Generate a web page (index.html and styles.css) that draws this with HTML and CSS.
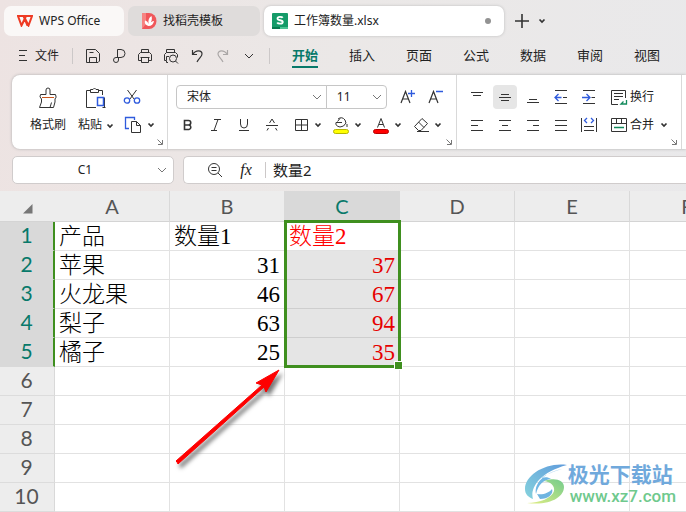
FILE: index.html
```
<!DOCTYPE html>
<html lang="zh-CN">
<head>
<meta charset="utf-8">
<title>工作簿数量.xlsx - WPS Office</title>
<link rel="stylesheet" href="styles.css">
</head>
<body>
<svg class="defs" aria-hidden="true">
  <symbol id="caret" viewBox="0 0 8 6"><path d="M1.5 1.5 4 4l2.5-2.5" stroke-width="1.7"/></symbol>
  <symbol id="chevron" viewBox="0 0 10 6"><path d="m1 1 4 4 4-4"/></symbol>
  <symbol id="launch" viewBox="0 0 6 6"><path d="m.5.5 4.500 4.500M1 5.500h4.500V1"/></symbol>
</svg>

<nav class="tabs">
  <button class="tab home">
    <svg width="16" height="12" viewBox="0 0 16 12"><path d="M1 1h14l-3.500 9.500L8 3.500l-3.500 7L1 1h5.500l4 9.500M4.500 10.500 9 1" fill="none" stroke="#ee3a23" stroke-width="2"/></svg>
    WPS Office
  </button>
  <button class="tab template">
    <svg width="16" height="16" viewBox="0 0 16 16"><path d="M1 0h7a7.500 8 0 0 1 0 16H1z" fill="#f0575a"/><path d="M1 0h4v11l-4 5z" fill="#f68482"/><path d="M7.500 13C4 12 3.500 10 4 7.500 6 8 7 9 7.500 11 7 7 8 4.500 10.500 3c1 3 0 6-2 8 .8-1.700 2.500-2.800 4.500-3-.5 3-2.500 5-5.500 5z" fill="#fff"/></svg>
    找稻壳模板
  </button>
  <button class="tab file">
    <svg width="16" height="16" viewBox="0 0 16 16"><rect width="16" height="16" rx="1" fill="#159b69"/><path d="M0 14h8v2H0z" fill="#087a4f"/><path d="M8 14h8v2H8z" fill="#4cc394"/><path d="M10.700 4.700C10 3.500 5.500 3.200 5.500 5.500c0 2.500 5.300 1 5.300 3.500 0 2.300-4.800 2-5.600.500" fill="none" stroke="#fff" stroke-width="1.800"/></svg>
    工作簿数量.xlsx
    <span class="dot"></span>
  </button>
  <button class="icon plus" aria-label="新建"><svg width="14" height="14" viewBox="0 0 14 14"><path d="M7 0v14M0 7h14" stroke-width="1.600"/></svg></button>
  <button class="icon more" aria-label="标签列表"><svg width="8" height="6"><use href="#caret"/></svg></button>
</nav>

<nav class="menu">
  <button class="filemenu"><svg width="10" height="12" viewBox="0 0 10 12"><path d="M1 .5h8M1 5.500h6M1 10.500h8"/></svg>文件</button>
  <i class="bar"></i>
  <div class="quick">
    <button class="icon" aria-label="保存"><svg width="16" height="16" viewBox="0 0 16 16"><path d="M1.500 14.500v-13h9l4 4v7.500l-1.500 1.500zM4.500 14.500v-5h7v5M4.500 4.500h4"/></svg></button>
    <button class="icon" aria-label="输出"><svg width="16" height="16" viewBox="0 0 16 16"><path d="M6.500 9.500v-8H10a4 4 0 0 1 0 8H5a2.500 2.500 0 1 0 2.500 2.500V9.500"/></svg></button>
    <button class="icon" aria-label="打印"><svg width="16" height="16" viewBox="0 0 16 16"><path d="M4.500 4.500v-3h7v3M4 12.500H1.500v-6l2-2h9l2 2v6H12M4.500 9.500h7v5h-7zM3.500 9.500h9"/></svg></button>
    <button class="icon" aria-label="打印预览"><svg width="16" height="16" viewBox="0 0 16 16"><path d="M3.500 4.500v-3h8v3M5 14.500H3.500v-2h-2v-6l2-2h9l2 2v3M3.500 12V8.500H6"/><circle cx="10" cy="10.500" r="3.500"/><path d="m12.500 13 2.500 2.500"/></svg></button>
    <button class="icon" aria-label="撤销"><svg width="16" height="16" viewBox="0 0 16 16"><path d="M3.500 2v4.500H8M3.500 6.500C7 1.500 13 2 13 6c0 2.500-2.500 3.500-5 8" stroke-width="1.200"/></svg></button>
    <button class="icon faded" aria-label="恢复"><svg width="16" height="16" viewBox="0 0 16 16"><path d="M12.500 2v4.500H8M12.500 6.500C9 1.500 3 2 3 6c0 2.500 2.500 3.500 5 8" stroke-width="1.200"/></svg></button>
    <button class="icon" aria-label="更多命令"><svg width="10" height="6"><use href="#chevron"/></svg></button>
  </div>
  <i class="bar"></i>
  <div class="pages">
    <a class="on" href="#">开始</a><a href="#">插入</a><a href="#">页面</a><a href="#">公式</a><a href="#">数据</a><a href="#">审阅</a><a href="#">视图</a>
  </div>
</nav>

<section class="ribbon">
  <div class="group clip">
    <button class="big"><svg width="20" height="22" viewBox="0 0 20 22"><path d="M8 7.500V3a2 2 0 0 1 4 0v4.500h5.500q1.500 3-.5 4.500v3l-1.500 5.500H1.500L3.500 15v-3Q1 10 2.500 7.500zM12 20.500l1.500-5"/><path d="M4 10.500h12" stroke="#c8561e"/></svg>格式刷</button>
    <button class="big"><svg width="22" height="22" viewBox="0 0 22 22"><path d="M11 20.500H1.500v-17H5M14 3.500h3.500V8M19.500 21V10.500M20.500 20.500h-3"/><path d="M5.500 5.500v-3h2.500q1.500-3 3 0h2.500v3z"/><path d="M12.500 10.500h6v8h-6z" stroke="#2f5bdd" stroke-width="1.500"/></svg><span>粘贴<svg class="tail" width="8" height="6"><use href="#caret"/></svg></span></button>
    <div class="stack">
      <button class="icon cut" aria-label="剪切"><svg width="18" height="16" viewBox="0 0 18 16"><path d="M4.500 1 11 10M13.500 1 7 10"/><g stroke="#2f5bdd" stroke-width="1.300"><circle cx="4" cy="11.500" r="2.700"/><circle cx="14" cy="11.500" r="2.700"/></g></svg></button>
      <button class="icon split" aria-label="复制"><svg width="18" height="18" viewBox="0 0 18 18"><path d="M5 12.500H1.500v-11h9V4" stroke="#2f5bdd" stroke-width="1.300"/><path d="M7.500 5.500h5l4 4v7h-9zM12.500 5.500v4h4"/></svg><svg width="8" height="6"><use href="#caret"/></svg></button>
    </div>
    <svg class="launch" width="6" height="6"><use href="#launch"/></svg>
  </div>

  <div class="group font">
    <div class="row">
      <label class="pick family"><select aria-label="字体"><option>宋体</option></select><svg width="10" height="6"><use href="#chevron"/></svg></label>
      <label class="pick size"><select aria-label="字号"><option>11</option></select><svg width="10" height="6"><use href="#chevron"/></svg></label>
      <button class="icon grow" aria-label="增大字号"><svg width="16" height="16" viewBox="0 0 16 16"><path d="m1 14 4.500-11.500L10 14M2.500 10h6" stroke-width="1.200"/><path d="M11.500 1v7M8 4.500h7" stroke="#2f5bdd" stroke-width="1.300"/></svg></button>
      <button class="icon" aria-label="减小字号"><svg width="16" height="16" viewBox="0 0 16 16"><path d="m1 14 4.500-11.500L10 14M2.500 10h6" stroke-width="1.200"/><path d="M8 2.500h7" stroke="#2f5bdd" stroke-width="1.300"/></svg></button>
    </div>
    <div class="row marks">
      <button class="icon" aria-label="加粗"><svg width="16" height="16" viewBox="0 0 16 16"><path d="M4.500 3.500h4a2.200 2.200 0 0 1 0 4.500h-4zM4.500 8H9a2.300 2.300 0 0 1 0 4.500H4.500z" stroke-width="1.600"/></svg></button>
      <button class="icon" aria-label="倾斜"><svg width="16" height="16" viewBox="0 0 16 16"><path d="M6 2.500h7M3 13.500h6M10 2.500l-4 11"/></svg></button>
      <button class="icon" aria-label="下划线"><svg width="16" height="16" viewBox="0 0 16 16"><path d="M4.500 2v5a3.500 4 0 0 0 7 0V2M3 13.500h10"/></svg></button>
      <button class="icon" aria-label="删除线"><svg width="16" height="16" viewBox="0 0 16 16"><path d="M5.500 6 8 2l2.500 4M2 8.500h12M4.500 11 3 13.500M11.500 11l1.500 2.500"/></svg></button>
      <button class="icon split" aria-label="边框"><svg width="16" height="16" viewBox="0 0 16 16"><path d="M2.500 2.500h12v11h-12zM8.500 2.500v11M2.500 8h12"/></svg><svg width="8" height="6"><use href="#caret"/></svg></button>
      <button class="icon split" aria-label="填充颜色"><svg width="16" height="18" viewBox="0 0 16 18"><path d="M5 3q4-3 7 1l1 3q-2 4-6 4Q2 10 3 6.500h6M7 2.500 4.500 5.500M14 8v3"/><rect x=".5" y="13.500" width="15" height="4" rx="2" fill="#ff0" stroke="#b6b600"/></svg><svg width="8" height="6"><use href="#caret"/></svg></button>
      <button class="icon split" aria-label="字体颜色"><svg width="16" height="18" viewBox="0 0 16 18"><path d="m4.500 11.500 3.500-9 3.500 9M6 8.500h4"/><rect x=".5" y="13.500" width="15" height="4" rx="2" fill="#f00" stroke="#b60000"/></svg><svg width="8" height="6"><use href="#caret"/></svg></button>
      <button class="icon split" aria-label="清除"><svg width="16" height="16" viewBox="0 0 16 16"><path d="M5.500 13.500 1.500 9.500 9 1.500l5.500 5-6.500 7zM5.500 5l5.500 5.500M4 14.500h12"/></svg><svg width="8" height="6"><use href="#caret"/></svg></button>
    </div>
    <svg class="launch" width="6" height="6"><use href="#launch"/></svg>
  </div>

  <div class="group align">
    <div class="row">
      <button class="icon" aria-label="顶端对齐"><svg width="14" height="14" viewBox="0 0 14 14"><path d="M1 2.500h12M3 5.500h8"/></svg></button>
      <button class="icon on" aria-label="垂直居中"><svg width="14" height="14" viewBox="0 0 14 14"><path d="M3 4.500h8M1 7.500h12M3 10.500h8"/></svg></button>
      <button class="icon" aria-label="底端对齐"><svg width="14" height="14" viewBox="0 0 14 14"><path d="M3 9.500h8M1 12.500h12"/></svg></button>
      <button class="icon" aria-label="减少缩进"><svg width="14" height="14" viewBox="0 0 14 14"><path d="M1 .5h12M1 13.500h12M9 7.500h4"/><path d="M1 7.500h6.500M4.500 4 1 7.500 4.500 11" stroke="#2f5bdd" stroke-width="1.300"/></svg></button>
      <button class="icon" aria-label="增加缩进"><svg width="14" height="14" viewBox="0 0 14 14"><path d="M1 .5h12M1 13.500h12M9.500 7.500H13"/><path d="M0 7.500h7.500M4.500 4 8 7.500 4.500 11" stroke="#2f5bdd" stroke-width="1.300"/></svg></button>
      <button class="word"><svg width="18" height="16" viewBox="0 0 18 16"><path d="M8 15.500H1.500V1.500h14V9M4 4.500h9M4 7.500h9M4 10.500h5"/><path d="M16.500 11v4h-5m2-2.500-2.500 2.500h3" stroke="#128a5c" stroke-width="1.300"/></svg>换行</button>
    </div>
    <div class="row">
      <button class="icon" aria-label="左对齐"><svg width="14" height="14" viewBox="0 0 14 14"><path d="M1 2.500h12M1 7.500h7M1 12.500h12"/></svg></button>
      <button class="icon" aria-label="水平居中"><svg width="14" height="14" viewBox="0 0 14 14"><path d="M1 2.500h12M4 7.500h6M1 12.500h12"/></svg></button>
      <button class="icon" aria-label="右对齐"><svg width="14" height="14" viewBox="0 0 14 14"><path d="M1 2.500h12M7 7.500h6M1 12.500h12"/></svg></button>
      <button class="icon" aria-label="两端对齐"><svg width="14" height="14" viewBox="0 0 14 14"><path d="M1 2.500h12M1 7.500h12M1 12.500h12"/></svg></button>
      <button class="icon" aria-label="分散对齐"><svg width="16" height="16" viewBox="0 0 16 16"><path d="M.5 1v14M15.500 1v14M3 9.500h10M3 13.500h10"/><path d="M6 1 3.500 3.500 6 6M10 1l2.500 2.500L10 6" stroke="#2f5bdd" stroke-width="1.300"/></svg></button>
      <button class="word"><svg width="18" height="16" viewBox="0 0 18 16"><path d="M1.500 1.500h15v13h-15zM1.500 6.500h15M6.500 1.500v5M11.500 1.500v5"/><path d="M4 10.500h10" stroke="#128a5c" stroke-width="1.300"/></svg>合并<svg class="tail" width="8" height="6"><use href="#caret"/></svg></button>
    </div>
    <svg class="launch" width="6" height="6"><use href="#launch"/></svg>
  </div>
</section>

<section class="entry">
  <label class="namebox"><input value="C1" aria-label="名称框"><svg width="10" height="6"><use href="#chevron"/></svg></label>
  <div class="formula">
    <button class="icon" aria-label="搜索"><svg width="16" height="16" viewBox="0 0 16 16"><circle cx="7" cy="7" r="5.500"/><path d="m11 11 4 4M4.500 5.500h5M4.500 8.500h5"/></svg></button>
    <button class="icon fx">fx</button>
    <i class="bar"></i>
    <input value="数量2" aria-label="编辑栏">
  </div>
</section>

<main class="sheet">
  <table>
    <colgroup><col class="c0"><col><col><col><col><col><col></colgroup>
    <thead><tr><th class="corner"><svg width="10" height="10" viewBox="0 0 10 10"><path d="M9.500 0v9.500H0z"/></svg></th><th>A</th><th>B</th><th class="sel">C</th><th>D</th><th>E</th><th>F</th></tr></thead>
    <tbody>
      <tr><th class="sel">1</th><td>产品</td><td>数量1</td><td class="pick-start"><b class="range"></b>数量2</td><td></td><td></td><td></td></tr>
      <tr><th class="sel">2</th><td>苹果</td><td class="num">31</td><td class="num hot">37</td><td></td><td></td><td></td></tr>
      <tr><th class="sel">3</th><td>火龙果</td><td class="num">46</td><td class="num hot">67</td><td></td><td></td><td></td></tr>
      <tr><th class="sel">4</th><td>梨子</td><td class="num">63</td><td class="num hot">94</td><td></td><td></td><td></td></tr>
      <tr><th class="sel">5</th><td>橘子</td><td class="num">25</td><td class="num hot">35</td><td></td><td></td><td></td></tr>
      <tr><th>6</th><td></td><td></td><td></td><td></td><td></td><td></td></tr>
      <tr><th>7</th><td></td><td></td><td></td><td></td><td></td><td></td></tr>
      <tr><th>8</th><td></td><td></td><td></td><td></td><td></td><td></td></tr>
      <tr><th>9</th><td></td><td></td><td></td><td></td><td></td><td></td></tr>
      <tr><th>10</th><td></td><td></td><td></td><td></td><td></td><td></td></tr>
    </tbody>
  </table>
  <svg class="arrow" width="120" height="110" viewBox="0 0 120 110"><path d="m6 93 1 2 86-77 2 5 13-22-23 13 6 2L5 92z" fill="#fe0000" stroke="#fe0000" stroke-width="1"/></svg>
  <div class="mark">
    <svg width="44" height="42" viewBox="0 0 44 42">
      <defs><linearGradient id="lg" x1="0" y1="1" x2="1" y2="0"><stop offset="0" stop-color="#86d3dd"/><stop offset="1" stop-color="#5f9bdc"/></linearGradient><linearGradient id="lg2" x1="0" y1="1" x2="1" y2="0"><stop offset="0" stop-color="#e3ee84"/><stop offset="1" stop-color="#74cc8c"/></linearGradient></defs>
      <path d="M43 1C22-2 1 11 1 25c0 5 3 8 8 10C6 26 13 9 43 1z" fill="url(#lg)"/>
      <path d="M38 5C20 9 10 19 12 30c2-9 7-14 15-15-3-2-6-2-9-1 4-4 11-6 20-9z" fill="#70b6e4"/>
      <path d="M20 17c11-4 20-1 20 6C40 33 26 42 3 39c13 0 25-5 27-12 1-5-3-9-10-10z" fill="url(#lg2)"/>
      <path d="M13 30c6 1 12-1 15-5 2 5-4 10-12 10z" fill="#6fb4e0"/>
    </svg>
    <p><strong>极光下载站</strong><span>www.xz7.com</span></p>
  </div>
</main>
</body>
</html>
```
FILE: styles.css
```
* { box-sizing: border-box; }
body {
  margin: 0;
  min-height: 100vh;
  overflow: hidden;
  background: linear-gradient(100deg, #ede3e2 0, #ebe8e7 45%, #e9e9eb 100%);
  color: #222;
  font: 12px/16px "Noto Sans", "Noto Sans CJK SC", sans-serif;
}
button, input, select { margin: 0; padding: 0; border: 0; background: none; color: inherit; font: inherit; }
svg { flex: none; fill: none; stroke: #333; }
svg [fill]:not([stroke]), .mark path { stroke: none; }
.defs { display: none; }
.icon { display: flex; align-items: center; justify-content: center; flex: none; width: 24px; height: 24px; border-radius: 4px; }
.bar { flex: none; width: 1px; height: 16px; background: #ccc8c8; }

.tabs { display: flex; align-items: center; gap: 4px; padding: 6px 4px 0; }
.tab { display: flex; align-items: center; gap: 6px; height: 30px; padding: 0 13px; border-radius: 7px; }
.home { width: 120px; background: #faf8f7; }
.template { width: 132px; background: #dfdcdb; }
.file { width: 240px; padding: 0 8px; background: #fff; box-shadow: 0 0 3px #bbb; }
.dot { width: 6px; height: 6px; margin-left: auto; margin-right: 5px; border-radius: 50%; background: #929292; }
.plus { margin-left: 2px; }
.more { width: 8px; }

.menu { display: flex; align-items: center; height: 39px; padding-left: 18px; }
.filemenu { display: flex; align-items: center; gap: 7px; width: 54px; font-size: 12px; }
.quick { display: flex; gap: 2px; width: 196px; padding-left: 8px; }
.faded { opacity: .35; }
.pages { display: flex; gap: 31px; padding-left: 22px; font-size: 13px; line-height: 22px; }
.pages a { flex: none; width: 26px; color: inherit; text-decoration: none; white-space: nowrap; border-bottom: 2px solid transparent; }
.pages .on { color: #08796a; font-weight: 700; border-color: #08796a; }

.ribbon { display: flex; height: 74px; margin-left: 12px; overflow: hidden; background: #fff; border-radius: 8px 0 0 8px; box-shadow: 0 0 3px #aaa; }
.group { position: relative; flex: none; display: flex; flex-direction: column; gap: 4px; padding: 10px 8px; border-right: 1px solid #d9d9d9; }
.row { display: flex; align-items: center; gap: 4px; }
.launch { position: absolute; right: 4px; bottom: 4px; stroke: #777; }
.clip { flex-direction: row; gap: 8px; width: 156px; padding-left: 16px; }
.big { display: flex; flex-direction: column; align-items: center; gap: 8px; width: 40px; padding-top: 2px; white-space: nowrap; }
.tail { margin-left: 4px; }
.stack { display: flex; flex-direction: column; gap: 4px; }
.cut { width: 16px; }
.font { width: 289px; }
.pick { position: relative; display: flex; align-items: center; height: 24px; border: 1px solid #c6c6c6; }
.pick select { appearance: none; width: 100%; height: 22px; padding-left: 10px; }
.pick svg { position: absolute; right: 4px; stroke: #777; pointer-events: none; }
.family { width: 153px; border-radius: 4px 0 0 4px; }
.size { width: 62px; margin-left: -5px; border-radius: 0 4px 4px 0; }
.grow { margin-left: 5px; }
.marks { gap: 0; }
.marks .icon { width: 28px; margin-left: -2px; margin-right: 2px; }
.split, .marks .split { width: 32px; gap: 5px; justify-content: flex-start; }
.marks .split { width: 40px; margin: 0; padding-left: 5px; }
.align { width: 225px; }
.align .on { background: #e6e6e6; }
.word { display: flex; align-items: center; gap: 2px; margin-left: 5px; white-space: nowrap; }

.entry { display: flex; gap: 9px; padding: 7px 0 7px 12px; }
.namebox, .formula { display: flex; align-items: center; height: 28px; background: #fff; border: 1px solid #d0cccc; border-radius: 5px; }
.namebox { width: 162px; padding-right: 6px; }
.namebox input { flex: 1; min-width: 0; padding-left: 0; text-align: center; font-size: 12px; }
.namebox svg { stroke: #777; }
.formula { flex: 1; border-right: 0; border-radius: 5px 0 0 5px; padding-left: 19px; gap: 7px; }
.fx { font: italic 16px/20px "Liberation Serif", serif; }
.formula input { flex: 1; min-width: 0; font-size: 15px; line-height: 20px; }

.sheet { position: relative; overflow: hidden; background: #fff; }
table { table-layout: fixed; width: 745px; border-collapse: separate; border-spacing: 0; }
.c0 { width: 55px; }
th { height: 29px; padding: 0; background: #ededed; color: #555; border-bottom: 1px solid #dcdcdc; font: 400 21px/26px Lato, sans-serif; }
thead th { height: 31px; border-right: 1px solid #d9d9d9; border-bottom-color: #d4d4d4; font-size: 20px; }
tbody th { padding: 0 1px 2px 0; border-right: 1px solid #d9d9d9; }
.sel { background: #d9d9d9; color: #08796a; }
tbody .sel { border-bottom-color: #d9d9d9; border-right: 2px solid #3f8f1f; padding-right: 0; }
thead .corner { border-right: 0; text-align: right; padding-right: 22px; }
.corner svg { fill: #777; stroke: none; }
td { height: 29px; padding: 2px 4px 0; border-right: 1px solid #e2e2e2; border-bottom: 1px solid #e2e2e2; color: #000; font: 300 23px/26px "Liberation Serif", "Noto Sans CJK SC", serif; vertical-align: bottom; white-space: nowrap; }
.num { text-align: right; }
.hot { background: #e5e5e5; color: #e60000; border-bottom-color: #cecece; }
.pick-start { position: relative; color: #f00; }
.range { position: absolute; z-index: 1; left: -1px; top: -2px; width: 117px; height: 148px; border: 3px solid #3f8f1f; }
.range::after { content: ""; position: absolute; right: -5px; bottom: -5px; width: 7px; height: 7px; border: 1px solid #fff; background: #3f8f1f; }
.arrow { position: absolute; left: 171px; top: 178px; filter: drop-shadow(3px 4px 2px #777); }
.mark { position: absolute; right: 10px; bottom: 6px; display: flex; align-items: flex-end; }
.mark p { display: flex; flex-direction: column; margin: 0; }
.mark strong { color: #70a9dc; font: 700 21px/26px "Noto Sans CJK SC", sans-serif; }
.mark span { margin-left: 2px; color: #6fc98d; font: 500 17px/20px Roboto, "Liberation Sans", sans-serif; }
```
